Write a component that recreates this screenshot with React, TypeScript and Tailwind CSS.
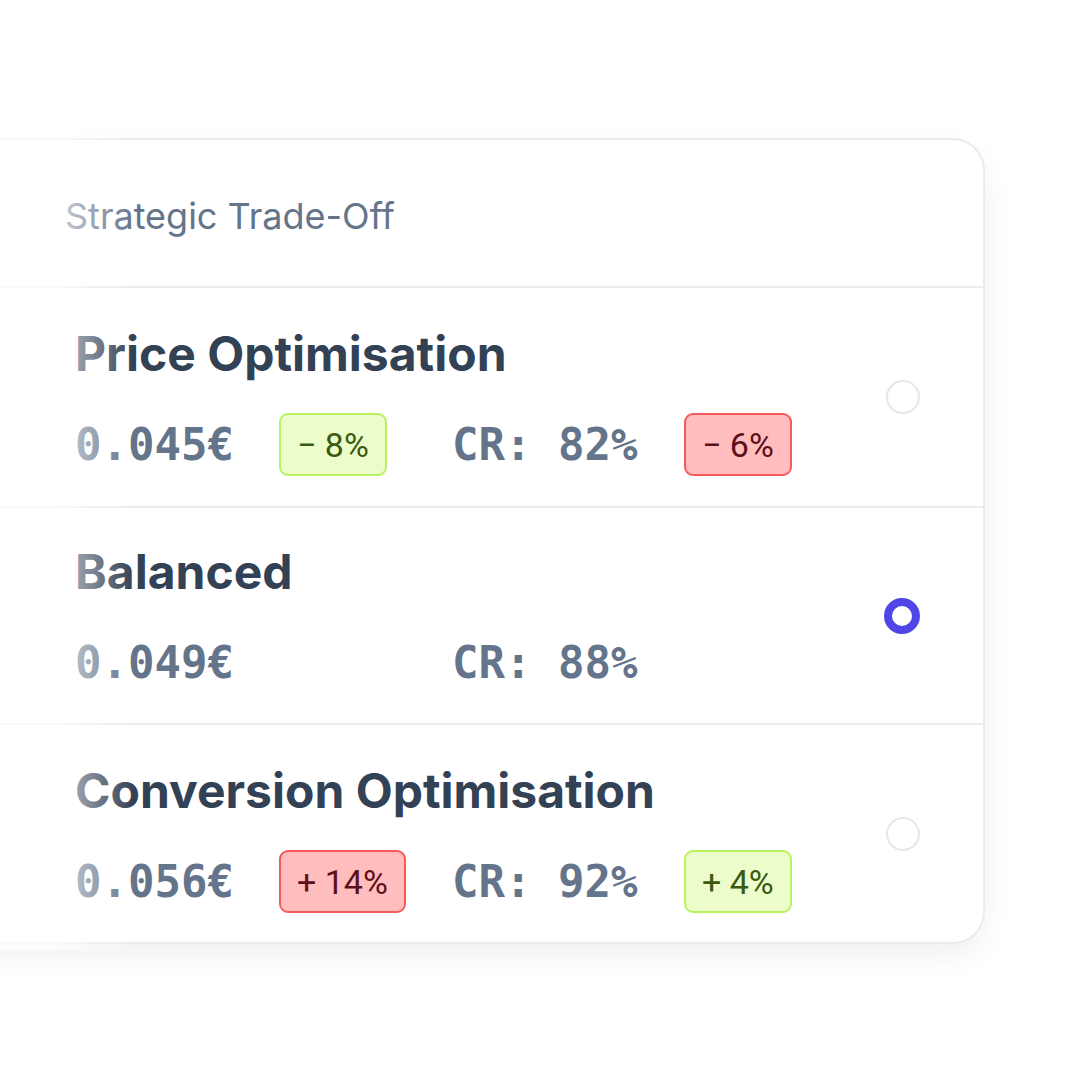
import React from "react";

type Badge = { text: string; tone: "green" | "red" };
type Row = {
  title: string;
  price: string;
  cr: string;
  priceBadge?: Badge;
  crBadge?: Badge;
  selected?: boolean;
  pt: string;
  h: string;
};

const rows: Row[] = [
  { title: "Price Optimisation", price: "0.045€", cr: "CR: 82%", priceBadge: { text: "− 8%", tone: "green" }, crBadge: { text: "− 6%", tone: "red" }, pt: "pt-[38px]", h: "h-[218px]" },
  { title: "Balanced", price: "0.049€", cr: "CR: 88%", selected: true, pt: "pt-[36px]", h: "h-[215px]" },
  { title: "Conversion Optimisation", price: "0.056€", cr: "CR: 92%", priceBadge: { text: "+ 14%", tone: "red" }, crBadge: { text: "+ 4%", tone: "green" }, pt: "pt-[38px]", h: "h-[217px]" },
];

function Pill({ b }: { b: Badge }) {
  const cls =
    b.tone === "green"
      ? "bg-[#ecfccb] border-[#b9f25e] text-[#3a5a10]"
      : "bg-[#ffbdbd] border-[#f65a5a] text-[#5e0f1c]";
  return (
    <div
      className={`inline-flex h-[63px] px-[16px] rounded-[9px] border-2 items-center text-[34px] font-normal leading-none ${cls}`}
      style={{ fontFamily: "Roboto, sans-serif" }}
    >
      {b.text}
    </div>
  );
}

const mono = { fontFamily: "'DejaVu Sans Mono', 'Liberation Mono', monospace" };

export default function App() {
  return (
    <div className="relative w-[1080px] h-[1080px] overflow-hidden bg-white">
      <div className="pt-[138px]">
        <div className="ml-[-40px] w-[1025px] bg-white border-2 border-l-0 border-[#ebebeb] rounded-r-[32px] shadow-[0_12px_28px_rgba(0,0,0,0.06)]">
          <div
            className="h-[148px] flex items-center pt-[6px] pl-[105px] text-[36px] text-[#64748b] border-b-2 border-[#ebebeb]"
            style={{ fontFamily: "Inter, 'Noto Sans', sans-serif" }}
          >
            Strategic Trade-Off
          </div>
          {rows.map((r, i) => (
            <div
              key={r.title}
              className={`${r.h} box-content flex justify-between pl-[115px] pr-[63px] ${i < rows.length - 1 ? "border-b-2 border-[#ebebeb]" : ""}`}
            >
              <div className={`flex flex-col gap-[31px] ${r.pt}`}>
                <div
                  className="h-[56px] flex items-center text-[48px] font-bold text-[#334155] leading-none"
                  style={{ fontFamily: "Inter, 'Noto Sans', sans-serif" }}
                >
                  {r.title}
                </div>
                <div className="h-[63px] flex items-center">
                  <div className="w-[204px] text-[44px] font-bold text-[#64748b] leading-none" style={mono}>
                    {r.price}
                  </div>
                  <div className="w-[173px]">{r.priceBadge && <Pill b={r.priceBadge} />}</div>
                  <div className="w-[232px] text-[44px] font-bold text-[#64748b] leading-none whitespace-pre" style={mono}>
                    {r.cr}
                  </div>
                  <div>{r.crBadge && <Pill b={r.crBadge} />}</div>
                </div>
              </div>
              <div className="flex items-center">
                {r.selected ? (
                  <div className="w-[36px] h-[36px] rounded-full border-[8px] border-[#4f46e5] bg-white" />
                ) : (
                  <div className="w-[34px] h-[34px] rounded-full border-2 border-[#e5e7eb] bg-white" />
                )}
              </div>
            </div>
          ))}
        </div>
      </div>
      <div className="absolute left-0 top-[130px] w-[134px] h-[820px] bg-gradient-to-r from-white from-40% to-white/0 opacity-70" />
    </div>
  );
}
